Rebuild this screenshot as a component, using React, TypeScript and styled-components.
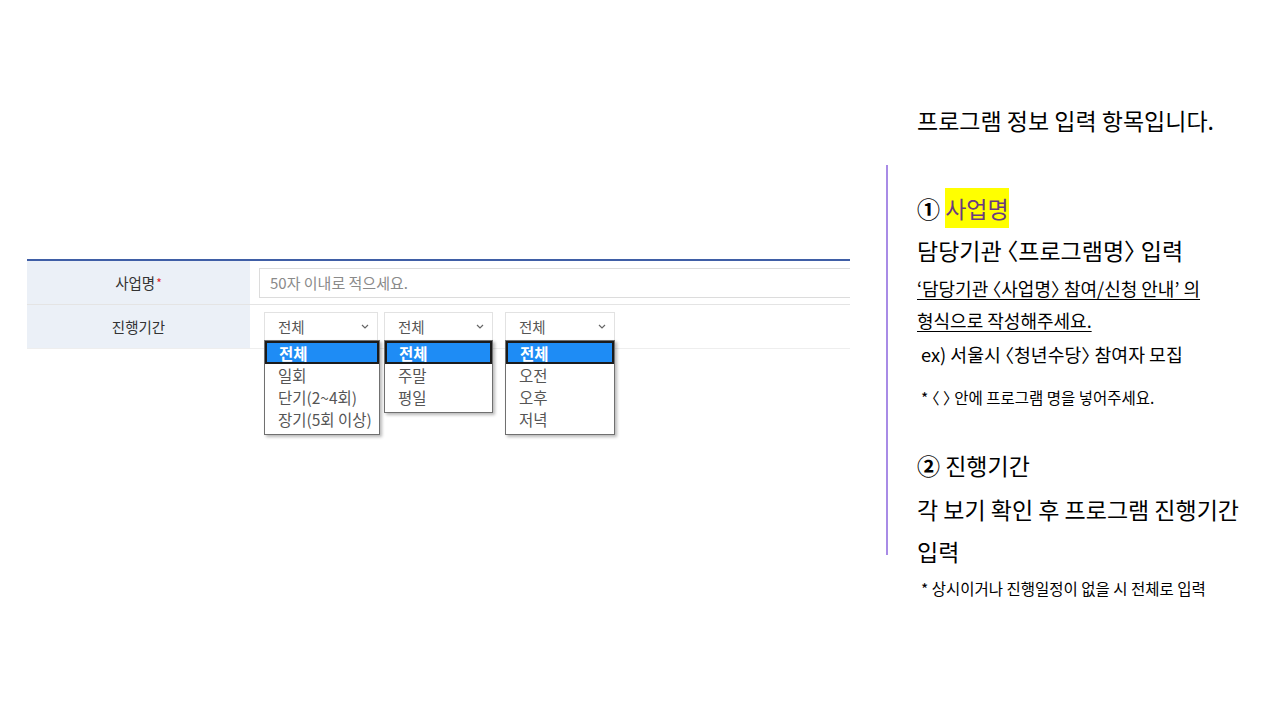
import styled, { createGlobalStyle } from "styled-components";

const GlobalStyle = createGlobalStyle`
  html, body {
    margin: 0;
    padding: 0;
    background: #ffffff;
  }
  body {
    font-family: "Noto Sans CJK KR", "Noto Sans", sans-serif;
    color: #111;
  }
`;

type SelectData = {
  width: number;
  listWidth: number;
  options: string[];
};

const selects: SelectData[] = [
  { width: 114, listWidth: 116, options: ["전체", "일회", "단기(2~4회)", "장기(5회 이상)"] },
  { width: 109, listWidth: 109, options: ["전체", "주말", "평일"] },
  { width: 110, listWidth: 110, options: ["전체", "오전", "오후", "저녁"] },
];

function Chevron() {
  return (
    <svg width="8" height="5" viewBox="0 0 8 5" fill="none">
      <polyline points="1,1 4,4 7,1" stroke="#666" strokeWidth="1.2" />
    </svg>
  );
}

export default function App() {
  return (
    <>
      <GlobalStyle />
      <Page>
        <FormArea>
          <Table>
            <Row>
              <LabelCell>
                사업명<Required>*</Required>
              </LabelCell>
              <FieldCell>
                <TextInput placeholder="50자 이내로 적으세요." readOnly />
              </FieldCell>
            </Row>
            <Row $light>
              <LabelCell>진행기간</LabelCell>
              <FieldCell $gap>
                {selects.map((s, i) => (
                  <SelectWrap key={i} $width={s.width} $first={i === 0} $wide={i === 2}>
                    <SelectBox>
                      <span>전체</span>
                      <Chevron />
                    </SelectBox>
                    <OptionList $width={s.listWidth}>
                      {s.options.map((o, j) => (
                        <Option key={o} $selected={j === 0}>
                          {o}
                        </Option>
                      ))}
                    </OptionList>
                  </SelectWrap>
                ))}
              </FieldCell>
            </Row>
          </Table>
        </FormArea>

        <Guide>
          <Title>프로그램 정보 입력 항목입니다.</Title>
          <Body>
            <Rule />
            <Content>
              <Heading>
                <Num>①</Num> <Mark>사업명</Mark>
              </Heading>
              <Heading>담당기관 〈프로그램명〉 입력</Heading>
              <Underlined $first>‘담당기관 〈사업명〉 참여/신청 안내’ 의</Underlined>
              <Underlined>형식으로 작성해주세요.</Underlined>
              <Example>ex) 서울시 〈청년수당〉 참여자 모집</Example>
              <Note $top={10}>* 〈 〉 안에 프로그램 명을 넣어주세요.</Note>
              <Heading $top={32}>
                <Num>②</Num> 진행기간
              </Heading>
              <Heading $top={2}>
                각 보기 확인 후 프로그램 진행기간
                <br />
                입력
              </Heading>
              <Note $top={1}>* 상시이거나 진행일정이 없을 시 전체로 입력</Note>
            </Content>
          </Body>
        </Guide>
      </Page>
    </>
  );
}

const Page = styled.div`
  width: 1280px;
  height: 720px;
  display: flex;
  overflow: hidden;
`;

const FormArea = styled.div`
  width: 823px;
  padding: 259px 0 0 27px;
  flex-shrink: 0;
`;

const Table = styled.div`
  display: flex;
  flex-direction: column;
  border-top: 2px solid #3f5ea6;
`;

const Row = styled.div<{ $light?: boolean }>`
  display: grid;
  grid-template-columns: 223px 1fr;
  height: 43px;
  border-bottom: 1px solid ${({ $light }) => ($light ? "#eeeeee" : "#e4e4e4")};
`;

const LabelCell = styled.div`
  background: #ebf0f7;
  display: flex;
  align-items: center;
  justify-content: center;
  font-size: 14.5px;
  color: #333;
`;

const Required = styled.span`
  color: #e0262a;
  font-size: 12px;
  margin-left: 1px;
  align-self: flex-start;
  margin-top: 13px;
`;

const FieldCell = styled.div<{ $gap?: boolean }>`
  display: flex;
  align-items: ${({ $gap }) => ($gap ? "flex-start" : "center")};
  padding: ${({ $gap }) => ($gap ? "7px 0 0 14px" : "0 0 0 9px")};
  min-width: 0;
`;

const TextInput = styled.input`
  flex: 1;
  height: 30px;
  box-sizing: border-box;
  border: 1px solid #dcdcdc;
  border-right: none;
  padding: 0 10px;
  font-family: "Noto Sans CJK KR", sans-serif;
  font-size: 15px;
  color: #333;
  outline: none;

  &::placeholder {
    color: #8a8a8a;
  }
`;

const SelectWrap = styled.div<{ $width: number; $first?: boolean; $wide?: boolean }>`
  position: relative;
  width: ${({ $width }) => $width}px;
  margin-left: ${({ $first, $wide }) => ($first ? 0 : $wide ? 12 : 6)}px;
`;

const SelectBox = styled.div`
  height: 28px;
  box-sizing: border-box;
  border: 1px solid #e2e2e2;
  border-bottom: none;
  display: flex;
  align-items: center;
  justify-content: space-between;
  padding: 0 8px 0 13px;
  font-size: 14.5px;
  color: #555;
  background: #fff;
`;

const OptionList = styled.div<{ $width: number }>`
  position: absolute;
  top: 28px;
  left: 0;
  width: ${({ $width }) => $width}px;
  box-sizing: border-box;
  background: #fff;
  border: 1px solid #707070;
  box-shadow: 2px 2px 3px rgba(0, 0, 0, 0.28);
  padding-bottom: 4px;
  overflow: hidden;
  z-index: 2;
`;

const Option = styled.div<{ $selected?: boolean }>`
  height: ${({ $selected }) => ($selected ? 23 : 22)}px;
  box-sizing: border-box;
  display: flex;
  align-items: center;
  white-space: nowrap;
  padding-left: ${({ $selected }) => ($selected ? 12 : 13)}px;
  font-size: 15.5px;
  color: ${({ $selected }) => ($selected ? "#fff" : "#555")};
  font-weight: ${({ $selected }) => ($selected ? 700 : 400)};
  background: ${({ $selected }) => ($selected ? "#1e8cf5" : "transparent")};
  border: ${({ $selected }) => ($selected ? "2px solid #1b1b1b" : "none")};
`;

const Guide = styled.div`
  flex: 1;
  padding: 103px 0 0 36px;
`;

const Title = styled.div`
  padding-left: 31px;
  font-size: 23px;
  line-height: 34px;
  color: #000;
  white-space: nowrap;
`;

const Body = styled.div`
  display: flex;
  align-items: flex-start;
  margin-top: 28px;
`;

const Rule = styled.div`
  width: 2px;
  height: 390px;
  background: #a88be6;
  flex-shrink: 0;
`;

const Content = styled.div`
  padding: 22px 0 0 29px;
  color: #000;
  font-feature-settings: "halt";
`;

const Heading = styled.div<{ $top?: number }>`
  font-size: 23px;
  line-height: 42px;
  margin-top: ${({ $top }) => $top ?? 0}px;
  white-space: nowrap;
`;

const Num = styled.span`
  font-weight: 700;
`;

const Mark = styled.span`
  background: #ffff00;
  color: #6a3b80;
  padding: 3px 0;
`;

const Underlined = styled.div<{ $first?: boolean }>`
  font-size: 18px;
  line-height: 32px;
  margin-top: ${({ $first }) => ($first ? 1 : 0)}px;
  text-decoration: underline;
  text-underline-offset: 3px;
  white-space: nowrap;
`;

const Example = styled.div`
  font-size: 18.3px;
  line-height: 36px;
  padding-left: 4px;
  white-space: nowrap;
`;

const Note = styled.div<{ $top?: number }>`
  font-size: 15.5px;
  line-height: 30px;
  padding-left: 4px;
  margin-top: ${({ $top }) => $top ?? 0}px;
  white-space: nowrap;
`;
